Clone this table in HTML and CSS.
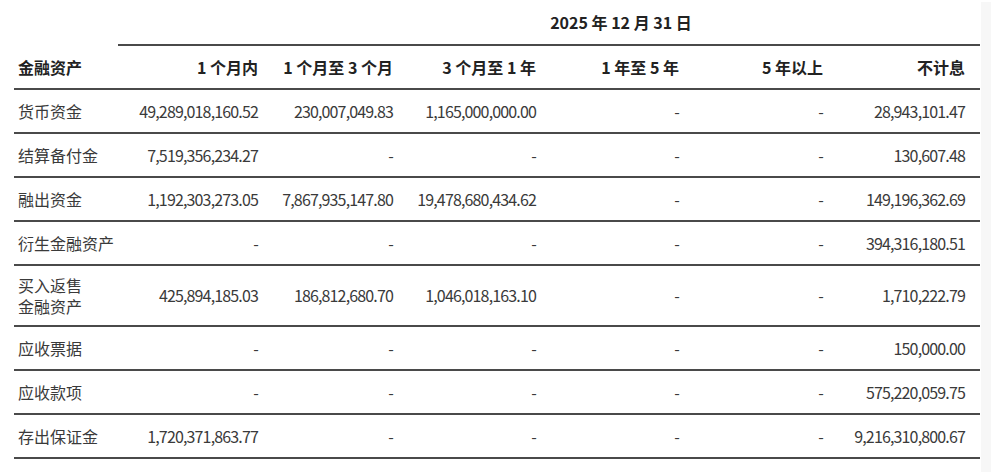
FILE: index.html
```html
<!DOCTYPE html>
<html lang="zh-CN">
<head>
<meta charset="utf-8">
<title>金融资产</title>
<link rel="stylesheet" href="styles.css">
</head>
<body>
<div class="page">
  <div class="table">
    <div class="date-row"><span class="date">2025 年 12 月 31 日</span></div>
    <div class="row head">
      <div class="label">金融资产</div>
      <div class="num">1 个月内</div>
      <div class="num">1 个月至 3 个月</div>
      <div class="num">3 个月至 1 年</div>
      <div class="num">1 年至 5 年</div>
      <div class="num">5 年以上</div>
      <div class="num last">不计息</div>
    </div>
    <div class="row">
      <div class="label">货币资金</div>
      <div class="num">49,289,018,160.52</div>
      <div class="num">230,007,049.83</div>
      <div class="num">1,165,000,000.00</div>
      <div class="num">-</div>
      <div class="num">-</div>
      <div class="num last">28,943,101.47</div>
    </div>
    <div class="row">
      <div class="label">结算备付金</div>
      <div class="num">7,519,356,234.27</div>
      <div class="num">-</div>
      <div class="num">-</div>
      <div class="num">-</div>
      <div class="num">-</div>
      <div class="num last">130,607.48</div>
    </div>
    <div class="row">
      <div class="label">融出资金</div>
      <div class="num">1,192,303,273.05</div>
      <div class="num">7,867,935,147.80</div>
      <div class="num">19,478,680,434.62</div>
      <div class="num">-</div>
      <div class="num">-</div>
      <div class="num last">149,196,362.69</div>
    </div>
    <div class="row">
      <div class="label">衍生金融资产</div>
      <div class="num">-</div>
      <div class="num">-</div>
      <div class="num">-</div>
      <div class="num">-</div>
      <div class="num">-</div>
      <div class="num last">394,316,180.51</div>
    </div>
    <div class="row tall">
      <div class="label">买入返售<br>金融资产</div>
      <div class="num">425,894,185.03</div>
      <div class="num">186,812,680.70</div>
      <div class="num">1,046,018,163.10</div>
      <div class="num">-</div>
      <div class="num">-</div>
      <div class="num last">1,710,222.79</div>
    </div>
    <div class="row">
      <div class="label">应收票据</div>
      <div class="num">-</div>
      <div class="num">-</div>
      <div class="num">-</div>
      <div class="num">-</div>
      <div class="num">-</div>
      <div class="num last">150,000.00</div>
    </div>
    <div class="row">
      <div class="label">应收款项</div>
      <div class="num">-</div>
      <div class="num">-</div>
      <div class="num">-</div>
      <div class="num">-</div>
      <div class="num">-</div>
      <div class="num last">575,220,059.75</div>
    </div>
    <div class="row">
      <div class="label">存出保证金</div>
      <div class="num">1,720,371,863.77</div>
      <div class="num">-</div>
      <div class="num">-</div>
      <div class="num">-</div>
      <div class="num">-</div>
      <div class="num last">9,216,310,800.67</div>
    </div>
  </div>
  <div class="strip"></div>
</div>
</body>
</html>
```

FILE: styles.css
```css
html, body {
  margin: 0;
  padding: 0;
  background: #ffffff;
}
body {
  font-family: "Noto Sans CJK SC", "Noto Sans", sans-serif;
  font-size: 16px;
  color: #3a3a3a;
}
.page {
  display: flex;
  padding-left: 14px;
  height: 472px;
  box-sizing: border-box;
}
.table {
  width: 966px;
  flex: none;
}
.strip {
  width: 10px;
  margin-left: 1px;
  margin-top: 2px;
  background: #f7f7f7;
  flex: none;
}
.date-row {
  margin-left: 104px;
  height: 46px;
  box-sizing: border-box;
  border-bottom: 2px solid #4a4a4a;
  display: flex;
  align-items: center;
  justify-content: center;
  padding-left: 144px;
  padding-bottom: 1px;
}
.date {
  font-weight: bold;
  color: #222;
}
.row {
  display: grid;
  grid-template-columns: 104px 145px 135px 143px 143px 144px 152px;
  height: 44px;
  box-sizing: border-box;
  border-bottom: 2px solid #4a4a4a;
  align-items: center;
}
.row.head {
  height: 44px;
  font-weight: bold;
  color: #222;
}
.row.tall {
  height: 61px;
  line-height: 21px;
}
.label {
  padding-left: 4px;
  white-space: nowrap;
}
.num {
  text-align: right;
  padding-right: 5px;
  white-space: nowrap;
  letter-spacing: -0.85px;
}
.row.head .num {
  letter-spacing: 0;
}
.num.last {
  padding-right: 15px;
}
```
